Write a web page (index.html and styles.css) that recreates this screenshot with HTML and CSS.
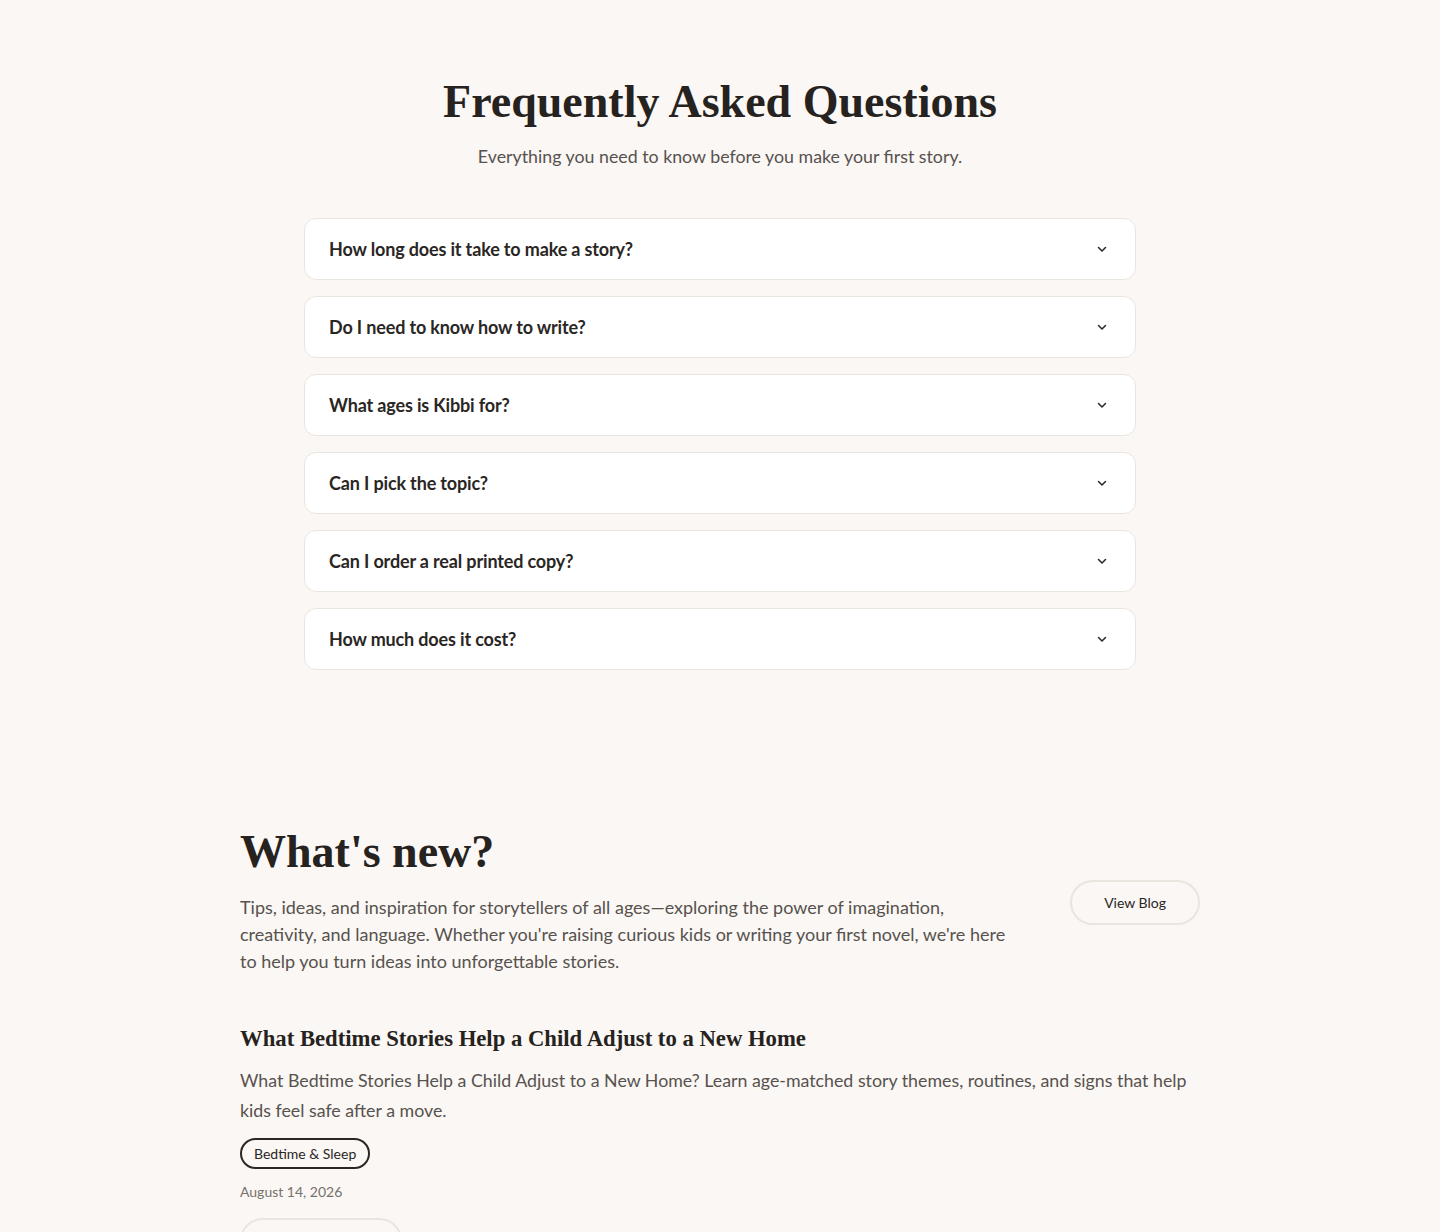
FILE: index.html
```html
<!DOCTYPE html>
<html>
<head>
    <meta charset="utf-8">
    <title>Kibbi - FAQ</title>
    <link rel="stylesheet" href="styles.css">
</head>
<body>
    <section class="faq">
        <h1 class="faq-title">Frequently Asked Questions</h1>
        <p class="faq-subtitle">Everything you need to know before you make your first story.</p>

        <div class="faq-list">
            <div class="faq-item">
                <span class="question">How long does it take to make a story?</span>
                <svg class="chevron" viewBox="0 0 16 16"><path d="M4.5 6.5 8 10l3.5-3.5"/></svg>
            </div>
            <div class="faq-item">
                <span class="question">Do I need to know how to write?</span>
                <svg class="chevron" viewBox="0 0 16 16"><path d="M4.5 6.5 8 10l3.5-3.5"/></svg>
            </div>
            <div class="faq-item">
                <span class="question">What ages is Kibbi for?</span>
                <svg class="chevron" viewBox="0 0 16 16"><path d="M4.5 6.5 8 10l3.5-3.5"/></svg>
            </div>
            <div class="faq-item">
                <span class="question">Can I pick the topic?</span>
                <svg class="chevron" viewBox="0 0 16 16"><path d="M4.5 6.5 8 10l3.5-3.5"/></svg>
            </div>
            <div class="faq-item">
                <span class="question">Can I order a real printed copy?</span>
                <svg class="chevron" viewBox="0 0 16 16"><path d="M4.5 6.5 8 10l3.5-3.5"/></svg>
            </div>
            <div class="faq-item">
                <span class="question">How much does it cost?</span>
                <svg class="chevron" viewBox="0 0 16 16"><path d="M4.5 6.5 8 10l3.5-3.5"/></svg>
            </div>
        </div>
    </section>

    <section class="news">
        <div class="news-head">
            <div class="news-copy">
                <h2 class="news-title">What's new?</h2>
                <p class="news-intro">Tips, ideas, and inspiration for storytellers of all ages—exploring the power of imagination, creativity, and language. Whether you're raising curious kids or writing your first novel, we're here to help you turn ideas into unforgettable stories.</p>
            </div>
            <a class="btn-outline blog-link" href="#">View Blog</a>
        </div>

        <article class="post">
            <h3 class="post-title">What Bedtime Stories Help a Child Adjust to a New Home</h3>
            <p class="post-text">What Bedtime Stories Help a Child Adjust to a New Home? Learn age-matched story themes, routines, and signs that help kids feel safe after a move.</p>
            <span class="tag">Bedtime &amp; Sleep</span>
            <div class="post-date">August 14, 2026</div>
            <a class="btn-outline read-more" href="#">Read full post</a>
        </article>
    </section>
</body>
</html>
```

FILE: styles.css
```css
body {
    margin: 0;
    background: #faf7f4;
    color: #2a2624;
    font-family: Lato, "Noto Sans", sans-serif;
}

.faq {
    max-width: 832px;
    margin: 0 auto;
    padding: 72px 0 0;
    text-align: center;
}
.faq-title {
    margin: 0;
    font-family: "Liberation Serif", "DejaVu Serif", serif;
    font-weight: 700;
    font-size: 46px;
    line-height: 60px;
    color: #262220;
}
.faq-subtitle {
    margin: 10px 0 0;
    font-size: 17.8px;
    line-height: 28px;
    color: #57524e;
}
.faq-list {
    margin-top: 48px;
    display: flex;
    flex-direction: column;
    gap: 16px;
    text-align: left;
}
.faq-item {
    display: flex;
    align-items: center;
    justify-content: space-between;
    height: 60px;
    padding: 0 24px;
    background: #ffffff;
    border: 1px solid #ebe5df;
    border-radius: 12px;
}
.question {
    font-size: 18px;
    font-weight: 700;
    letter-spacing: -0.15px;
    color: #2a2624;
}
.chevron {
    width: 16px;
    height: 16px;
    margin-right: 1px;
    fill: none;
    stroke: #2a2624;
    stroke-width: 1.5;
    stroke-linecap: round;
    stroke-linejoin: round;
}

.news {
    max-width: 960px;
    margin: 0 auto;
    padding: 150px 0 0;
}
.news-head {
    display: flex;
    justify-content: space-between;
    align-items: center;
}
.news-title {
    margin: 0;
    font-family: "Liberation Serif", "DejaVu Serif", serif;
    font-weight: 700;
    font-size: 46px;
    line-height: 64px;
    color: #262220;
}
.news-intro {
    margin: 10px 0 0;
    max-width: 770px;
    font-size: 18px;
    line-height: 27px;
    color: #57524e;
}
.btn-outline {
    display: inline-block;
    padding: 12px 32px;
    border: 2px solid #ebe5df;
    border-radius: 999px;
    font-size: 14px;
    line-height: 17px;
    color: #2a2624;
    text-decoration: none;
}
.blog-link {
    margin-top: 10px;
}

.post {
    margin-top: 48px;
}
.post-title {
    margin: 0;
    font-family: "Liberation Serif", "DejaVu Serif", serif;
    font-weight: 700;
    font-size: 22.7px;
    line-height: 32px;
    color: #262220;
}
.post-text {
    margin: 10px 0 0;
    font-size: 17.8px;
    line-height: 30px;
    color: #57524e;
}
.tag {
    display: inline-block;
    margin-top: 13px;
    padding: 5px 12px;
    border: 2px solid #2a2624;
    border-radius: 999px;
    font-size: 14px;
    line-height: 17px;
}
.post-date {
    margin-top: 14px;
    font-size: 14px;
    color: #77716c;
}
.read-more {
    margin-top: 18px;
    padding: 12px 37px;
}
```
